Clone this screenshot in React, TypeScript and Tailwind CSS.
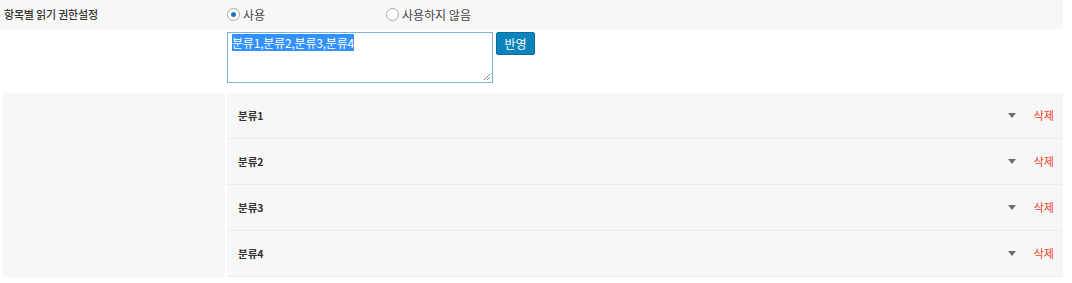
import React from 'react'

const categories = ['분류1', '분류2', '분류3', '분류4']

function Radio({ checked, label }: { checked?: boolean; label: string }) {
  return (
    <label className="flex items-center gap-[3px] text-[12px] text-[#444]">
      <span className="flex h-[13px] w-[13px] items-center justify-center rounded-full border border-[#a9a9a9] bg-white">
        {checked && <span className="h-[5px] w-[5px] rounded-full bg-[#1a73c9]" />}
      </span>
      {label}
    </label>
  )
}

function Caret() {
  return (
    <svg width="8" height="5" viewBox="0 0 8 5" className="block">
      <path d="M0 0h8L4 5z" fill="#6b6f73" />
    </svg>
  )
}

export default function App() {
  return (
    <div
      className="w-[1072px] h-[283px] bg-white pr-[9px]"
      style={{ fontFamily: '"Noto Sans CJK KR", "Noto Sans", sans-serif' }}
    >
      {/* header row */}
      <div className="flex h-[29px] items-center bg-[#f7f7f7]">
        <div className="w-[227px] pl-[4px] text-[11px] font-medium tracking-[-0.2px] text-[#333]">항목별 읽기 권한설정</div>
        <div className="w-[159px]">
          <Radio checked label="사용" />
        </div>
        <Radio label="사용하지 않음" />
      </div>

      {/* input row */}
      <div className="flex pt-[3px]">
        <div className="w-[227px]" />
        <div className="relative h-[51px] w-[266px] border border-[#7eb4e2] bg-white px-[4px] pt-[2px] text-[12px] leading-[15px] tracking-[-0.2px]">
          <span className="bg-[#3390ff] text-white">분류1,분류2,분류3,분류4</span>
          <svg width="8" height="8" viewBox="0 0 8 8" className="absolute bottom-[1px] right-[1px]">
            <path d="M7 1L1 7M7 4L4 7" stroke="#8a8a8a" strokeWidth="1" />
          </svg>
        </div>
        <button className="ml-[3px] h-[23px] w-[39px] rounded-[2px] border border-[#0a6d9c] bg-[#0c83bb] text-[12px] text-white">
          반영
        </button>
      </div>

      {/* category list */}
      <div className="mt-[10px] flex">
        <div className="ml-[2px] w-[223px] bg-[#f7f7f7]" />
        <div className="ml-[2px] flex-1">
          {categories.map((c) => (
            <div
              key={c}
              className="flex h-[46px] items-center border-b border-[#ececec] bg-[#f7f7f7] pl-[11px] pr-[9px]"
            >
              <span className="flex-1 text-[10.5px] font-bold text-[#333]">{c}</span>
              <Caret />
              <span className="ml-[18px] text-[11px] text-[#ee3d22]">삭제</span>
            </div>
          ))}
        </div>
      </div>
    </div>
  )
}
